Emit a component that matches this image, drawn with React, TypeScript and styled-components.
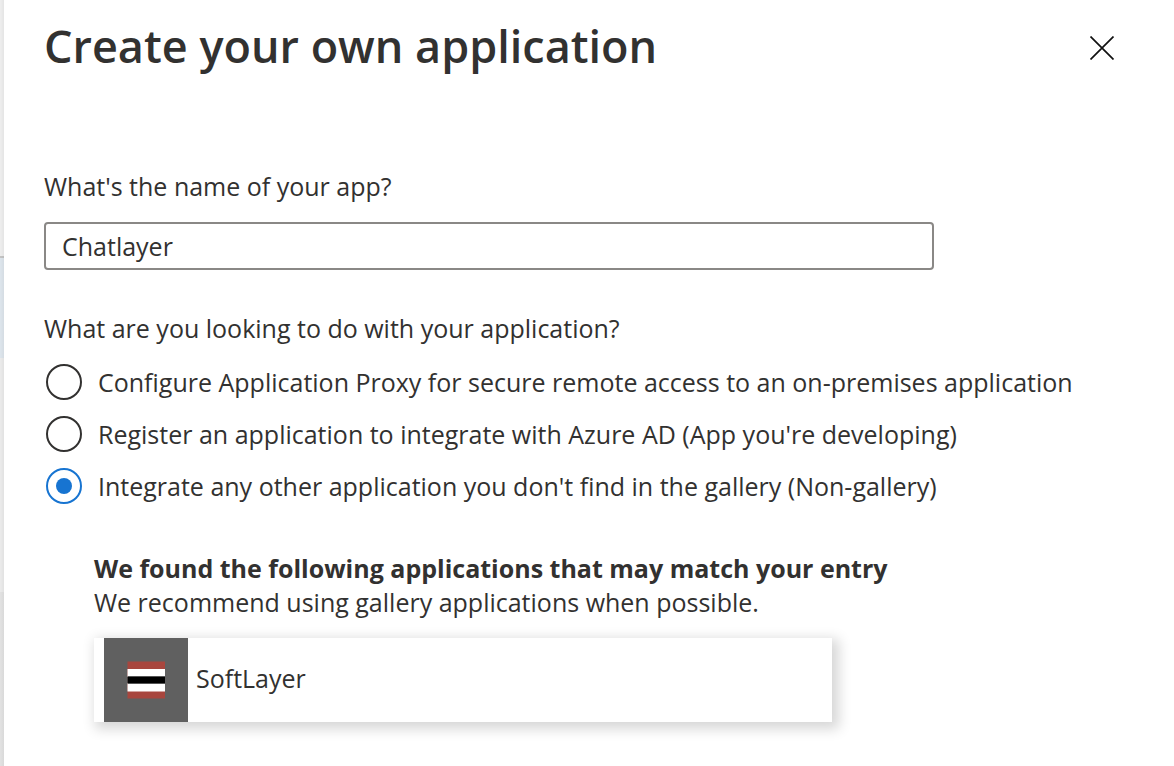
import React, { useState } from "react";
import styled, { createGlobalStyle } from "styled-components";

const GlobalStyle = createGlobalStyle`
  *, *::before, *::after { box-sizing: border-box; }
  body {
    margin: 0;
    background: #fff;
    color: #323130;
    font-family: "Open Sans", "Noto Sans", sans-serif;
    font-size: 25px;
    line-height: 34px;
  }
`;

const Page = styled.div`
  display: flex;
  min-height: 100vh;
`;

const Backdrop = styled.div`
  display: flex;
  flex-direction: column;
  flex: 0 0 4px;
`;

const BackdropBand = styled.div<{ $tone: string; $height?: number }>`
  flex: ${(p) => (p.$height ? `0 0 ${p.$height}px` : "1 0 0")};
  background: linear-gradient(to right, transparent, rgba(0, 0, 0, 0.04)), ${(p) => p.$tone};
`;

const Panel = styled.main`
  flex: 1;
  min-width: 0;
  padding: 16px 40px 40px;
  background: #fff;
`;

const Header = styled.header`
  display: flex;
  align-items: center;
  justify-content: space-between;
  height: 64px;
`;

const Title = styled.h1`
  margin: 0;
  padding-bottom: 4px;
  font-size: 45px;
  font-weight: 600;
  line-height: 60px;
`;

const CloseButton = styled.button`
  display: flex;
  align-items: center;
  justify-content: center;
  width: 64px;
  height: 64px;
  padding: 0;
  border: 0;
  background: none;
  color: #111;
  cursor: pointer;
`;

const Form = styled.form`
  padding-top: 89px;
`;

const FieldLabel = styled.label`
  display: block;
  margin-bottom: 19px;
`;

const TextInput = styled.input`
  display: block;
  width: 100%;
  max-width: 890px;
  height: 48px;
  padding: 0 16px;
  border: 2px solid #8a8886;
  border-radius: 4px;
  background: #fff;
  color: inherit;
  font: inherit;
  outline: none;
`;

const Choices = styled.fieldset`
  display: flex;
  flex-direction: column;
  gap: 16px;
  min-width: 0;
  margin: 41px 0 0;
  padding: 0;
  border: 0;
`;

const Legend = styled.legend`
  margin-bottom: 19px;
  padding: 0;
`;

const Choice = styled.label`
  display: flex;
  align-items: center;
  gap: 16px;
  padding-left: 2px;
  cursor: pointer;
`;

const Radio = styled.input`
  appearance: none;
  display: grid;
  place-items: center;
  flex: none;
  width: 36px;
  height: 36px;
  margin: 0;
  border: 2px solid #323130;
  border-radius: 50%;
  background: #fff;

  &:checked {
    border-color: #1774d1;
  }

  &:checked::before {
    content: "";
    width: 16px;
    height: 16px;
    border-radius: 50%;
    background: #1774d1;
  }
`;

const Matches = styled.section`
  max-width: 788px;
  margin-top: 47px;
  padding-left: 50px;
`;

const MatchesTitle = styled.h2`
  margin: 0;
  font-size: 25px;
  font-weight: 700;
  line-height: 34px;
  white-space: nowrap;
`;

const MatchesHint = styled.p`
  margin: 0 0 19px;
`;

const AppCard = styled.button`
  display: flex;
  align-items: center;
  gap: 8px;
  width: 100%;
  height: 84px;
  padding: 0 10px;
  border: 0;
  background: #fff;
  box-shadow: 4px 4px 12px 3px rgba(0, 0, 0, 0.16);
  color: inherit;
  font: inherit;
  text-align: left;
  cursor: pointer;
`;

const AppLogo = styled.svg`
  flex: none;
  width: 84px;
  height: 84px;
  background: #606060;
`;

const AppName = styled.span`
  padding-bottom: 4px;
`;

const purposes = [
  "Configure Application Proxy for secure remote access to an on-premises application",
  "Register an application to integrate with Azure AD (App you're developing)",
  "Integrate any other application you don't find in the gallery (Non-gallery)",
];

export default function App() {
  const [name, setName] = useState("Chatlayer");
  const [purpose, setPurpose] = useState(2);

  return (
    <>
      <GlobalStyle />
      <Page>
        <Backdrop aria-hidden="true">
          <BackdropBand $tone="#eeeeee" $height={256} />
          <BackdropBand $tone="#c4c4c4" $height={2} />
          <BackdropBand $tone="#dde5ec" $height={100} />
          <BackdropBand $tone="#ebebeb" $height={234} />
          <BackdropBand $tone="#e2e2e2" />
        </Backdrop>
        <Panel>
          <Header>
            <Title>Create your own application</Title>
            <CloseButton type="button" aria-label="Close">
              <svg width="24" height="24" viewBox="0 0 24 24" fill="none" stroke="currentColor" strokeWidth="1.7">
                <path d="M0.5 0.5 23.5 23.5M23.5 0.5 0.5 23.5" />
              </svg>
            </CloseButton>
          </Header>
          <Form onSubmit={(e) => e.preventDefault()}>
            <FieldLabel htmlFor="app-name">What's the name of your app?</FieldLabel>
            <TextInput id="app-name" type="text" value={name} onChange={(e) => setName(e.target.value)} />
            <Choices>
              <Legend>What are you looking to do with your application?</Legend>
              {purposes.map((text, i) => (
                <Choice key={text}>
                  <Radio type="radio" name="purpose" checked={purpose === i} onChange={() => setPurpose(i)} />
                  {text}
                </Choice>
              ))}
            </Choices>
            <Matches>
              <MatchesTitle>We found the following applications that may match your entry</MatchesTitle>
              <MatchesHint>We recommend using gallery applications when possible.</MatchesHint>
              <AppCard type="button">
                <AppLogo viewBox="0 0 84 84" aria-hidden="true">
                  <path fill="#a8463e" d="M23.5 23.5h37.5v37h-37.5z" />
                  <path fill="#fff" d="M23.5 31h37.5v22.5h-37.5z" />
                  <path fill="#555" d="M23.5 38h37.5v8h-37.5z" />
                  <path fill="#000" d="M23.5 39h37.5v6h-37.5z" />
                </AppLogo>
                <AppName>SoftLayer</AppName>
              </AppCard>
            </Matches>
          </Form>
        </Panel>
      </Page>
    </>
  );
}
